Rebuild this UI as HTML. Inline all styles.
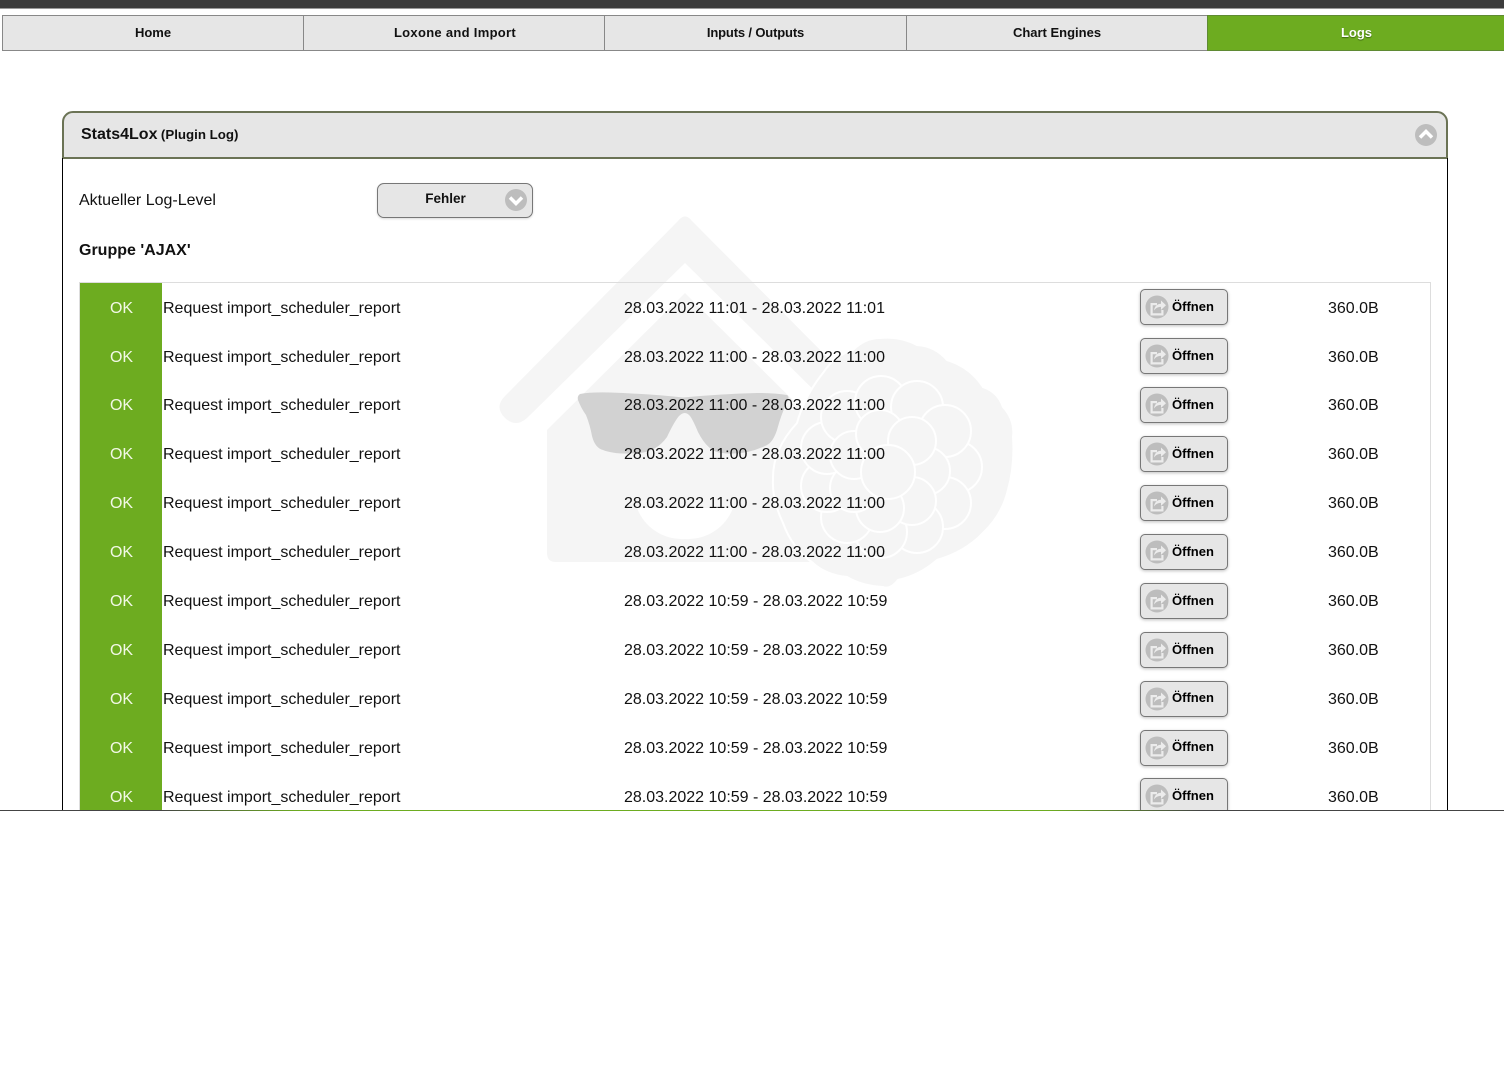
<!DOCTYPE html>
<html><head><meta charset="utf-8"><title>Stats4Lox</title>
<style>
html,body{margin:0;padding:0;background:#fff;width:1504px;height:1066px;overflow:hidden;font-family:"Liberation Sans",Arial,sans-serif;color:#111}
.a{position:absolute}
#top{left:0;top:0;width:1504px;height:8px;background:#3c3c3c;border-bottom:1px solid #999}
.nav{position:absolute;top:15px;height:34px;line-height:34px;background:#e6e6e6;border:1px solid #888;border-left-width:1px;text-align:center;font-size:13px;font-weight:bold;box-sizing:content-box}
.nav.on{background:#6dac20;color:#fff;border-color:#5f8a33;text-shadow:0 1px 1px #3d6a10}
#clip{left:0;top:0;width:1504px;height:810px;overflow:hidden}
#head{left:62px;top:111px;width:1382px;height:44px;background:#e6e6e6;border:2px solid #6b7355;border-radius:11px 11px 0 0}
#lb{left:62px;top:158px;width:1px;height:660px;background:#000}
#rb{left:1447px;top:158px;width:1px;height:660px;background:#000}
#tbl{left:79px;top:282px;width:1350px;height:540px;border:1px solid #ddd}
#okc{left:80px;top:283px;width:82px;height:530px;background:#6dac20}
.t{position:absolute;font-size:16px;line-height:18px;white-space:nowrap}
.ok{left:80px;width:83px;text-align:center;color:#f2f8e6}
.btn{position:absolute;left:1140px;width:86px;height:34px;background:#e6e6e6;border:1px solid #777;border-radius:5px;box-shadow:0 1px 3px rgba(0,0,0,.25)}
.btn b{position:absolute;left:31px;top:9px;font-size:13px;line-height:15px;color:#000}
.btn svg{position:absolute;left:4px;top:5px}
#bot{left:0;top:810px;width:1504px;height:1px;background:linear-gradient(90deg,#444 0,#444 160px,#6dac20 300px,#6dac20 1050px,#444 1200px,#444 100%)}
</style></head><body>
<svg width="0" height="0" style="position:absolute"><defs>
<symbol id="sh" viewBox="0 0 24 24"><circle cx="12" cy="12" r="11.500" fill="#bdbdbd"/><path d="M5.500 8h6.500v2.200H7.700v8.100h8.600v-3.300h2.200V20.500H5.500z" fill="#ececec"/><path d="M9 15.500c.4-4 3.200-6.800 7-6.800V5.500l5 4.700-5 4.700v-3c-3 0-5.200 1-7 3.600z" fill="#ececec"/></symbol>
</defs></svg>

<div id="clip" class="a">
<svg class="a" style="left:0;top:0" width="1504" height="810" viewBox="0 0 1504 810">
 <path d="M505 396L678 221Q685 212 692 221L851 381L828 404L685 263L527 418Q516 428 505 418Q494 407 505 396Z" fill="#f5f5f5"/>
 <path d="M547 430L685 293L823 430V562H556Q547 562 547 553Z" fill="#f5f5f5"/>
 <path d="M637 508H733A48 48 0 0 1 685 539A48 48 0 0 1 637 508Z" fill="#fff"/>
 <path d="M880 338Q900 336 917 345Q935 346 947 360Q970 367 983 387Q998 392 1003 407Q1015 420 1013 437Q1015 465 1008 490Q1002 515 983 533Q965 552 937 560Q920 575 898 580Q890 590 883 587Q862 586 847 577Q826 575 813 563Q792 548 783 523Q772 500 773 480Q772 450 797 423Q805 395 823 373Q835 355 853 350Q865 338 880 338Z" fill="#f5f5f5" stroke="#fff" stroke-width="2"/>
 <g fill="#f5f5f5" stroke="#fff" stroke-width="2">
  <circle cx="956" cy="467" r="26"/><circle cx="945" cy="503" r="26"/><circle cx="917" cy="527" r="26"/><circle cx="881" cy="532" r="26"/><circle cx="847" cy="517" r="26"/><circle cx="827" cy="486" r="26"/><circle cx="827" cy="448" r="26"/><circle cx="847" cy="417" r="26"/><circle cx="881" cy="402" r="26"/><circle cx="917" cy="407" r="26"/><circle cx="945" cy="431" r="26"/>
  <circle cx="926" cy="471" r="24"/><circle cx="912" cy="501" r="24"/><circle cx="880" cy="508" r="24"/><circle cx="854" cy="488" r="24"/><circle cx="854" cy="455" r="24"/><circle cx="880" cy="434" r="24"/><circle cx="912" cy="441" r="24"/>
  <circle cx="888" cy="472" r="27"/>
 </g>
 <path d="M580 394Q590 392 610 392.500Q650 394 683 397.500Q720 394 757 393Q775 393 787 395Q790 397 787 402Q781 415 777 430Q773 442 767 445Q745 456 722 453Q708 452 698 432Q693 420 690 416Q685 410 679 416Q674 422 667 437Q657 451 640 453Q615 455 603 450Q595 448 592 436Q590 425 586 415Q581 408 578 400Q577 396 580 394Z" fill="#d2d2d2"/>
</svg>

<div id="head" class="a"></div>
<div class="t" style="left:81px;top:126px;font-weight:bold;word-spacing:-1px">Stats4Lox <span style="font-size:13.300px;word-spacing:0">(Plugin Log)</span></div>
<svg class="a" style="left:1415px;top:124px" width="22" height="22" viewBox="0 0 22 22"><circle cx="11" cy="11" r="11" fill="#bdbdbd"/><path d="M5 13.500L11 7.500L17 13.500" fill="none" stroke="#fff" stroke-width="3.500"/></svg>
<div id="lb" class="a"></div><div id="rb" class="a"></div>

<div class="t" style="left:79px;top:192px">Aktueller Log-Level</div>
<div class="a" style="left:377px;top:183px;width:154px;height:33px;background:#e6e6e6;border:1px solid #777;border-radius:7px;box-shadow:0 1px 2px rgba(0,0,0,.15)"></div>
<div class="a" style="left:377px;top:191px;width:137px;text-align:center;font-size:13.500px;line-height:16px;font-weight:bold">Fehler</div>
<svg class="a" style="left:505px;top:189px" width="22" height="22" viewBox="0 0 22 22"><circle cx="11" cy="11" r="11" fill="#bdbdbd"/><path d="M5 8.500L11 14.500L17 8.500" fill="none" stroke="#fff" stroke-width="3.500"/></svg>
<div class="t" style="left:79px;top:242px;font-weight:bold">Gruppe 'AJAX'</div>

<div id="tbl" class="a"></div>
<div id="okc" class="a"></div>

<div class="t ok" style="top:300px">OK</div><div class="t" style="left:163px;top:300px">Request import_scheduler_report</div><div class="t" style="left:624px;top:300px">28.03.2022 11:01 - 28.03.2022 11:01</div><div class="btn" style="top:289px"><svg width="24" height="24"><use href="#sh"/></svg><b>Öffnen</b></div><div class="t" style="left:1328px;top:300px">360.0B</div>
<div class="t ok" style="top:349px">OK</div><div class="t" style="left:163px;top:349px">Request import_scheduler_report</div><div class="t" style="left:624px;top:349px">28.03.2022 11:00 - 28.03.2022 11:00</div><div class="btn" style="top:338px"><svg width="24" height="24"><use href="#sh"/></svg><b>Öffnen</b></div><div class="t" style="left:1328px;top:349px">360.0B</div>
<div class="t ok" style="top:397px">OK</div><div class="t" style="left:163px;top:397px">Request import_scheduler_report</div><div class="t" style="left:624px;top:397px">28.03.2022 11:00 - 28.03.2022 11:00</div><div class="btn" style="top:387px"><svg width="24" height="24"><use href="#sh"/></svg><b>Öffnen</b></div><div class="t" style="left:1328px;top:397px">360.0B</div>
<div class="t ok" style="top:446px">OK</div><div class="t" style="left:163px;top:446px">Request import_scheduler_report</div><div class="t" style="left:624px;top:446px">28.03.2022 11:00 - 28.03.2022 11:00</div><div class="btn" style="top:436px"><svg width="24" height="24"><use href="#sh"/></svg><b>Öffnen</b></div><div class="t" style="left:1328px;top:446px">360.0B</div>
<div class="t ok" style="top:495px">OK</div><div class="t" style="left:163px;top:495px">Request import_scheduler_report</div><div class="t" style="left:624px;top:495px">28.03.2022 11:00 - 28.03.2022 11:00</div><div class="btn" style="top:485px"><svg width="24" height="24"><use href="#sh"/></svg><b>Öffnen</b></div><div class="t" style="left:1328px;top:495px">360.0B</div>
<div class="t ok" style="top:544px">OK</div><div class="t" style="left:163px;top:544px">Request import_scheduler_report</div><div class="t" style="left:624px;top:544px">28.03.2022 11:00 - 28.03.2022 11:00</div><div class="btn" style="top:534px"><svg width="24" height="24"><use href="#sh"/></svg><b>Öffnen</b></div><div class="t" style="left:1328px;top:544px">360.0B</div>
<div class="t ok" style="top:593px">OK</div><div class="t" style="left:163px;top:593px">Request import_scheduler_report</div><div class="t" style="left:624px;top:593px">28.03.2022 10:59 - 28.03.2022 10:59</div><div class="btn" style="top:583px"><svg width="24" height="24"><use href="#sh"/></svg><b>Öffnen</b></div><div class="t" style="left:1328px;top:593px">360.0B</div>
<div class="t ok" style="top:642px">OK</div><div class="t" style="left:163px;top:642px">Request import_scheduler_report</div><div class="t" style="left:624px;top:642px">28.03.2022 10:59 - 28.03.2022 10:59</div><div class="btn" style="top:632px"><svg width="24" height="24"><use href="#sh"/></svg><b>Öffnen</b></div><div class="t" style="left:1328px;top:642px">360.0B</div>
<div class="t ok" style="top:691px">OK</div><div class="t" style="left:163px;top:691px">Request import_scheduler_report</div><div class="t" style="left:624px;top:691px">28.03.2022 10:59 - 28.03.2022 10:59</div><div class="btn" style="top:681px"><svg width="24" height="24"><use href="#sh"/></svg><b style="top:8px">Öffnen</b></div><div class="t" style="left:1328px;top:691px">360.0B</div>
<div class="t ok" style="top:740px">OK</div><div class="t" style="left:163px;top:740px">Request import_scheduler_report</div><div class="t" style="left:624px;top:740px">28.03.2022 10:59 - 28.03.2022 10:59</div><div class="btn" style="top:730px"><svg width="24" height="24"><use href="#sh"/></svg><b style="top:8px">Öffnen</b></div><div class="t" style="left:1328px;top:740px">360.0B</div>
<div class="t ok" style="top:789px">OK</div><div class="t" style="left:163px;top:789px">Request import_scheduler_report</div><div class="t" style="left:624px;top:789px">28.03.2022 10:59 - 28.03.2022 10:59</div><div class="btn" style="top:778px"><svg width="24" height="24"><use href="#sh"/></svg><b>Öffnen</b></div><div class="t" style="left:1328px;top:789px">360.0B</div>
</div>

<div id="top" class="a"></div>
<div class="nav" style="left:2px;width:300px">Home</div>
<div class="nav" style="left:303px;width:300px;letter-spacing:.3px;text-indent:2px">Loxone and Import</div>
<div class="nav" style="left:604px;width:301px;letter-spacing:-.15px">Inputs / Outputs</div>
<div class="nav" style="left:906px;width:300px">Chart Engines</div>
<div class="nav on" style="left:1207px;width:297px;border-right:0">Logs</div>
<div id="bot" class="a"></div>
</body></html>
